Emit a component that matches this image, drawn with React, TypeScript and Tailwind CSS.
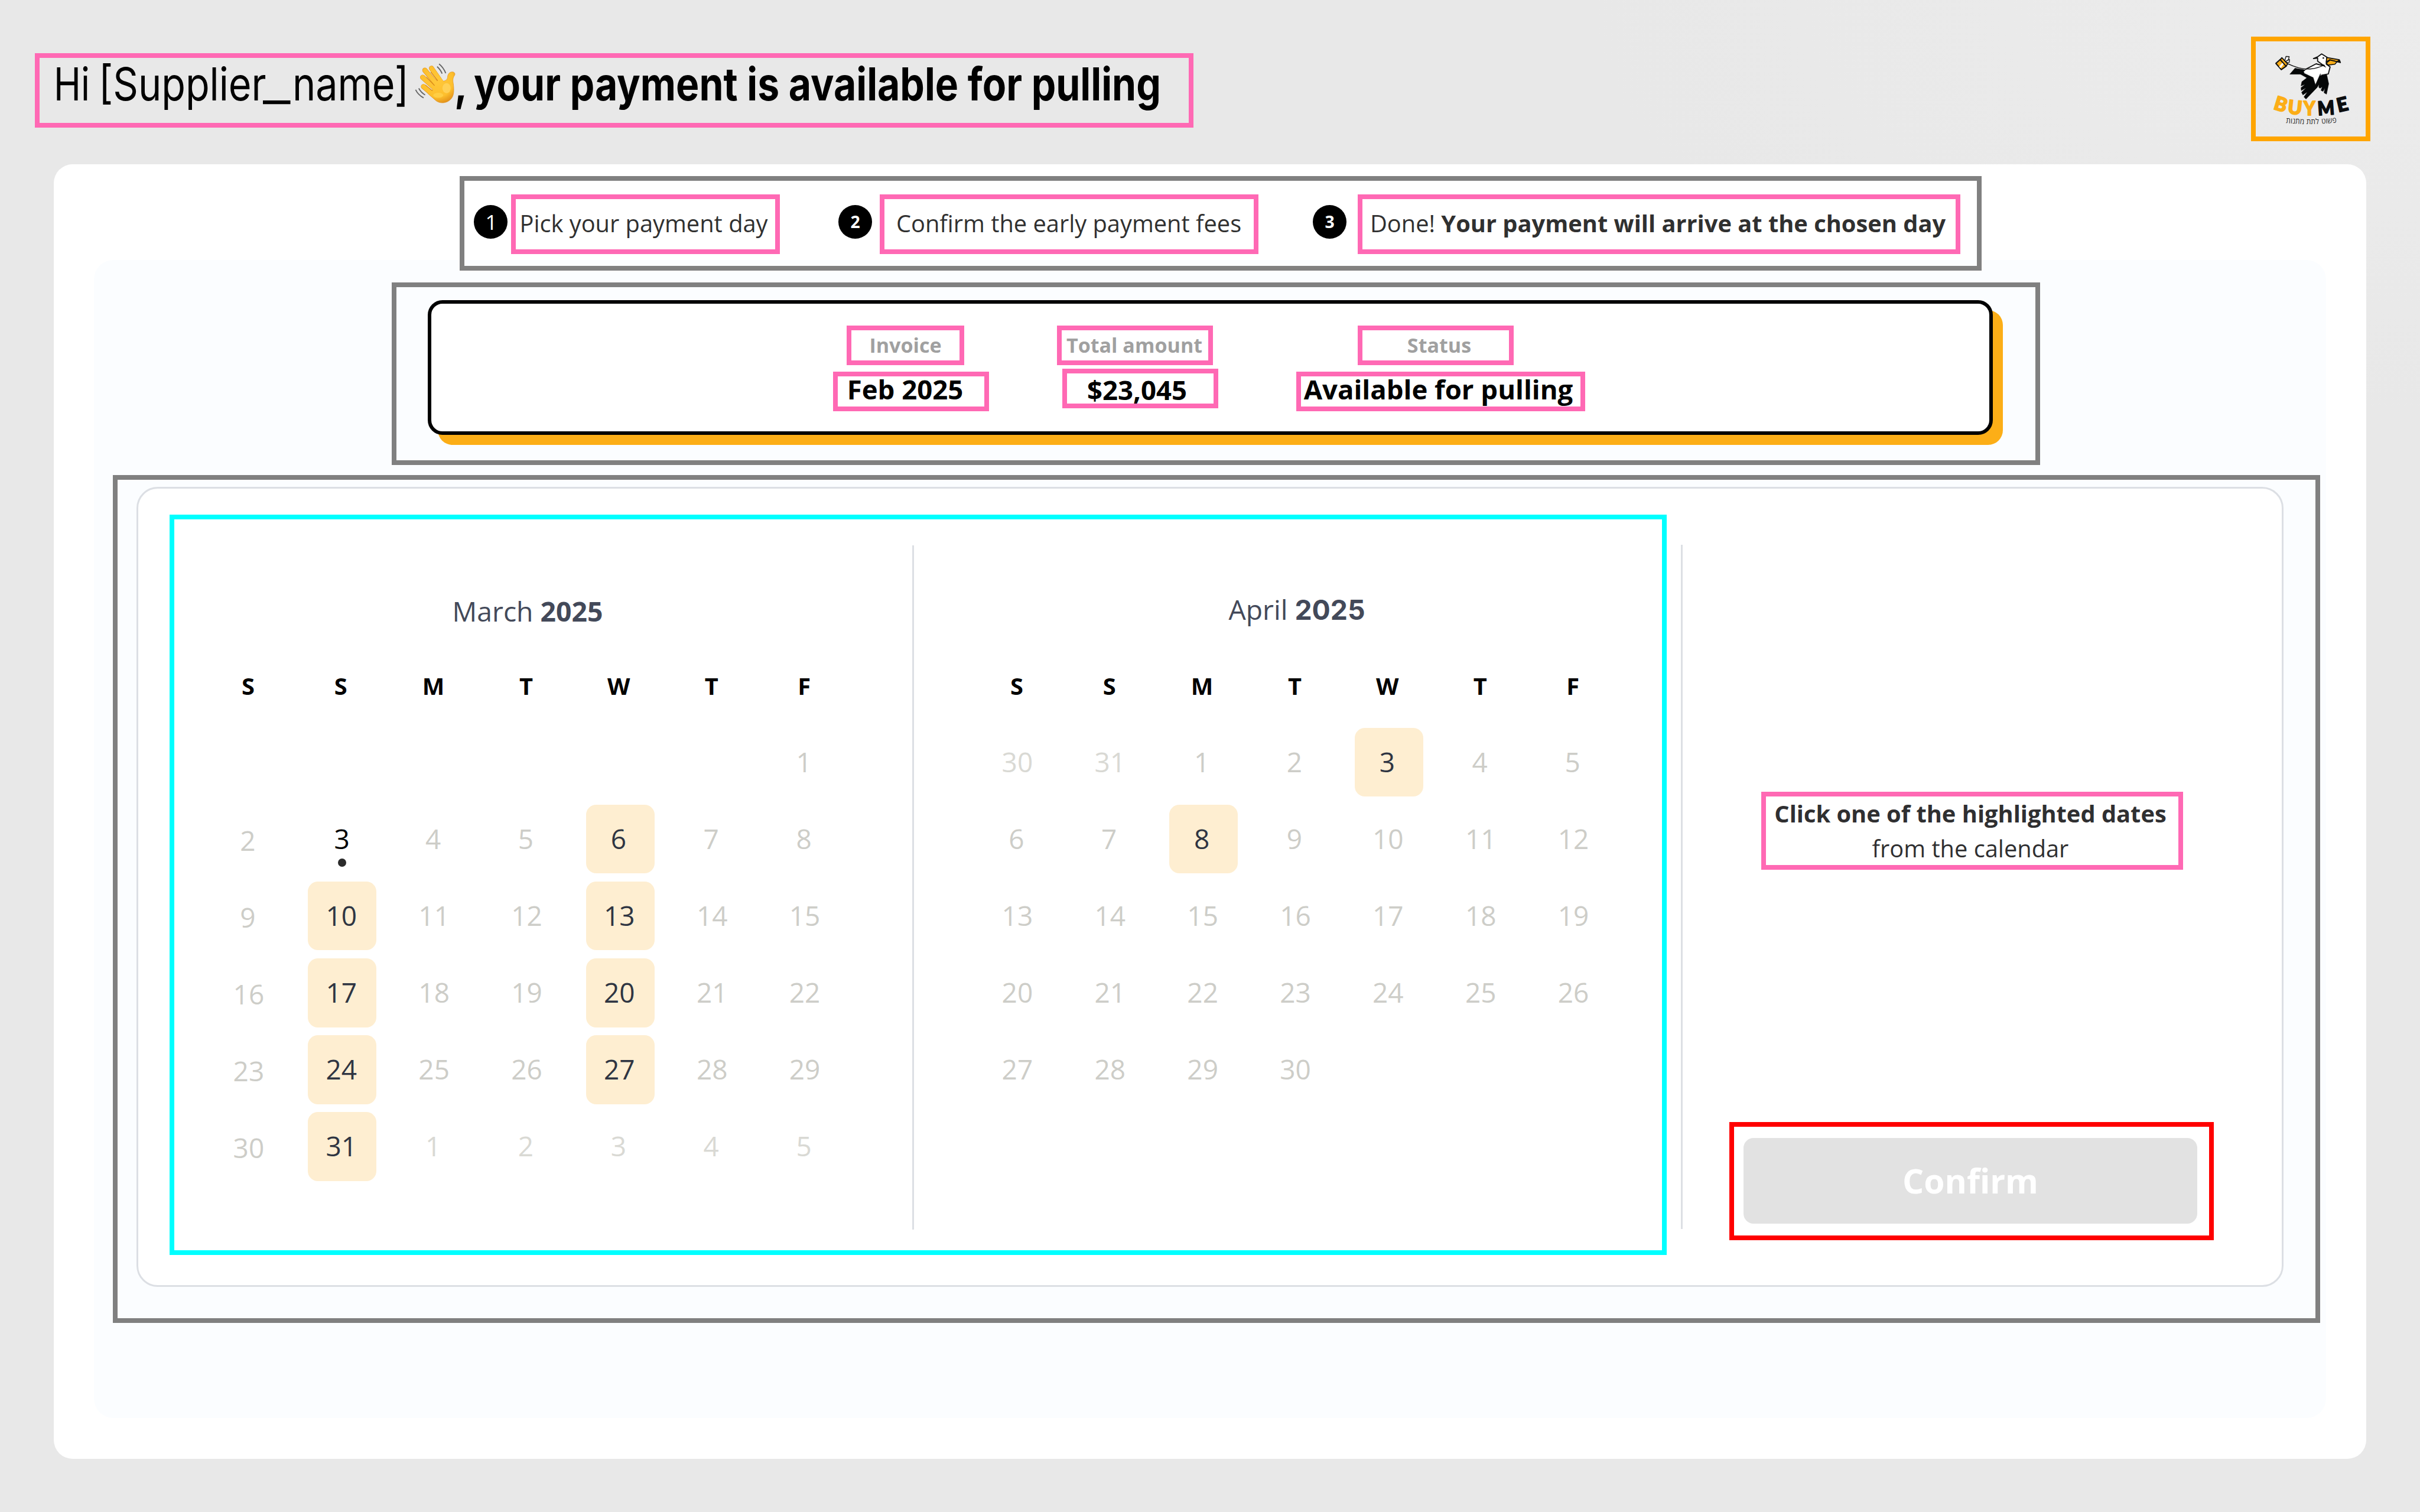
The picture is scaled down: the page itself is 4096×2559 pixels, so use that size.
import type { ReactNode } from "react";

type Day = { n: string; kind?: "off" | "dim" | "pick" | "today" };

const off = (...ns: number[]): Day[] => ns.map((n) => ({ n: String(n), kind: "off" }));
const dim = (...ns: number[]): Day[] => ns.map((n) => ({ n: String(n), kind: "dim" }));
const pick = (n: number): Day => ({ n: String(n), kind: "pick" });
const blank = (count: number): Day[] => Array.from({ length: count }, () => ({ n: "" }));

const MARCH: Day[] = [
  ...blank(6), ...off(1),
  ...off(2), { n: "3", kind: "today" }, ...off(4, 5), pick(6), ...off(7, 8),
  ...off(9), pick(10), ...off(11, 12), pick(13), ...off(14, 15),
  ...off(16), pick(17), ...off(18, 19), pick(20), ...off(21, 22),
  ...off(23), pick(24), ...off(25, 26), pick(27), ...off(28, 29),
  ...off(30), pick(31), ...dim(1, 2, 3, 4, 5),
];

const APRIL: Day[] = [
  ...dim(30, 31), ...off(1, 2), pick(3), ...off(4, 5),
  ...off(6, 7), pick(8), ...off(9, 10, 11, 12),
  ...off(13, 14, 15, 16, 17, 18, 19),
  ...off(20, 21, 22, 23, 24, 25, 26),
  ...off(27, 28, 29, 30),
];

const WEEKDAYS = ["S", "S", "M", "T", "W", "T", "F"];

const DAY_COLOR = {
  off: "text-[#cdcdc8]",
  dim: "text-[#d9d9d4]",
  pick: "text-[#2f3542] bg-[#feeed1]",
  today: "text-black",
};

function DayCell({ day, lowered }: { day: Day; lowered: boolean }) {
  const nudge = day.kind === "today" ? "pr-[1px]" : day.n.length === 1 ? "pr-[6px]" : "pr-[3px]";
  return (
    <div className="flex h-[130.1px] items-center justify-center">
      <div
        className={`relative flex h-[116.4px] w-[116.4px] items-center justify-center rounded-[17px] text-[46px] leading-none ${
          day.kind ? DAY_COLOR[day.kind] : ""
        } ${nudge} ${lowered ? "pt-[3px]" : "pb-[3px]"}`}
      >
        {day.n}
        {day.kind === "today" && (
          <span className="absolute bottom-[11px] left-[51px] size-[14px] rounded-full bg-[#2b2b2b]" />
        )}
      </div>
    </div>
  );
}

function Month({ title, days, lowerFirst, className }: { title: ReactNode; days: Day[]; lowerFirst?: boolean; className: string }) {
  return (
    <div className={`flex w-[1098px] flex-col ${className}`}>
      <div className="flex h-[64px] items-center justify-center whitespace-pre text-[46.300px] leading-none text-[#434959]">{title}</div>
      <div className="mt-auto grid h-[56px] grid-cols-7 items-center text-center text-[39.8px] leading-none font-bold text-black">
        {WEEKDAYS.map((d, i) => (
          <span key={i} className="pr-[5px]">{d}</span>
        ))}
      </div>
      <div className="mt-[36px] grid h-[782px] grid-cols-7 content-start">
        {days.map((d, i) => (
          <DayCell key={i} day={d} lowered={!!lowerFirst && i % 7 === 0} />
        ))}
      </div>
    </div>
  );
}

function Pink({ className, children }: { className: string; children: ReactNode }) {
  return (
    <div className={`flex shrink-0 items-center justify-center border-8 border-[#ff69b4] leading-none whitespace-nowrap ${className}`}>
      {children}
    </div>
  );
}

function Bullet({ className, children }: { className: string; children: ReactNode }) {
  return (
    <div className={`mt-[41px] flex size-[57px] shrink-0 items-center justify-center rounded-full bg-black leading-none text-white ${className}`}>
      {children}
    </div>
  );
}

function Squeezed({ className, children }: { className: string; children: ReactNode }) {
  return <span className={`inline-block origin-left ${className}`}>{children}</span>;
}

function WavingHand() {
  return (
    <svg viewBox="55 60 300 300" className="h-[70.2px] w-[70.2px]" fill="none" strokeLinecap="round">
      <defs>
        <radialGradient id="skin" gradientUnits="userSpaceOnUse" cx="215" cy="190" r="170">
          <stop offset="0" stopColor="#ffc83a" />
          <stop offset="0.7" stopColor="#fdbf2d" />
          <stop offset="1" stopColor="#e2901a" />
        </radialGradient>
      </defs>
      <g stroke="#e0921c" strokeWidth="37">
        <path d="M176 101 L248 205" />
        <path d="M128 115 L220 225" />
        <path d="M112 166 L210 255" />
        <path d="M118 233 L220 320" />
      </g>
      <path
        d="M222 186 C245 198 285 200 292 170 C292 145 305 128 325 127 C342 126 350 140 343 152 C330 170 329 188 334 212 C340 260 340 300 315 325 C290 352 245 360 212 338 L150 284 L190 250 L200 215 Z"
        fill="url(#skin)"
        stroke="#e0921c"
        strokeWidth="3"
      />
      <g stroke="url(#skin)" strokeWidth="32">
        <path d="M176 101 L250 205" />
        <path d="M128 115 L222 225" />
        <path d="M112 166 L210 255" />
        <path d="M118 233 L220 318" />
      </g>
      <g stroke="#d98a18" strokeWidth="5">
        <path d="M172 130 L220 189" />
        <path d="M140 166 L197 225" />
        <path d="M134 223 L182 263" />
      </g>
      <ellipse cx="285" cy="245" rx="30" ry="36" fill="#ffd766" opacity="0.7" />
      <ellipse cx="225" cy="296" rx="36" ry="18" fill="#ffd34f" opacity="0.7" />
      <g stroke="#666" strokeWidth="8" strokeLinecap="butt">
        <path d="M231 70 Q262 95 279 136" />
        <path d="M217 89 Q242 112 253 140" />
        <path d="M84 246 Q100 276 130 294" />
        <path d="M61 256 Q80 294 119 315" />
      </g>
    </svg>
  );
}

function BuyMeLogo() {
  return (
    <svg viewBox="168 120 792 684" className="h-full w-full" strokeLinejoin="round">
      <path d="M414 356 L451 313 L525 326 L512 356 Z" fill="#050708" stroke="#050708" strokeWidth="3" />
      <path d="M512 340 L540 315 L603 281 L655 296 L680 280 L704 303 L691 354 L636 366 L598 432 L582 380 Z" fill="#fff" />
      <path d="M525 322 L603 281 L648 293" fill="none" stroke="#111" strokeWidth="8" />
      <path
        d="M505 344 L582 380 L598 432 L634 352 L634 366 L680 360 L694 425 L678 500 L660 490 L666 456 L653 480 L638 473 L647 446 L632 458 L622 450 L624 430 L610 452 L530 535 L515 520 L540 484 L508 506 L498 486 L530 455 L496 474 L494 453 L524 429 L494 441 L500 410 L536 382 L490 356 Z"
        fill="#050708"
        stroke="#050708"
        strokeWidth="2"
      />
      <path d="M395 278 C450 305 510 322 560 318 C610 315 645 300 680 280" fill="none" stroke="#111" strokeWidth="6" />
      <path d="M676 283 L704 303 L691 354 L640 364" fill="none" stroke="#111" strokeWidth="8" />
      <path d="M584 243 L612 232 L643 210 L682 234 L672 290 L652 290 L614 262 L614 240 Z" fill="#fff" />
      <path d="M652 290 L614 262 L614 240 L584 243 L612 232 L643 210 L682 234 L676 280" fill="none" stroke="#111" strokeWidth="8" />
      <path d="M584 244 L612 230 L616 242 Z" fill="#111" />
      <path d="M632 286 L660 286 L676 309 Z" fill="#050708" />
      <circle cx="655" cy="239" r="5.500" fill="#111" />
      <path d="M680 236 L770 252 L778 272 L700 252 L676 268 Z" fill="#fcae17" stroke="#111" strokeWidth="8" />
      <path d="M704 254 L754 266 L738 284 L690 290 L676 276 Z" fill="#fcae17" stroke="#111" strokeWidth="7" />
      <path d="M752 264 L779 273 L768 250 Z" fill="#111" />
      <path d="M376 262 L386 228 L409 229 L404 250 L386 262 L411 250 L410 270 L392 272 Z" fill="#f4f4f4" stroke="#222" strokeWidth="6" />
      <path d="M344 250 L388 298 L352 323 L313 278 Z" fill="#fcae17" stroke="#111" strokeWidth="9" />
      <path d="M336 302 L362 270 L372 280 L348 312 Z" fill="#fff" />
      <path d="M356 237 L398 282 L386 298 L345 251 Z" fill="#fcae17" stroke="#111" strokeWidth="8" />
      <g fontFamily="Lato, sans-serif" fontWeight="900" fontSize="138" textAnchor="middle" strokeWidth="8">
        <g fill="#fcae17" stroke="#fcae17">
          <text transform="translate(334 619) rotate(17)">B</text>
          <text transform="translate(446 644) rotate(6)">U</text>
          <text transform="translate(555 653) scale(0.92 1)">Y</text>
        </g>
        <g fill="#0b0d0f" stroke="#0b0d0f">
          <text transform="translate(678 648) rotate(-4) scale(0.92 1)">M</text>
          <text transform="translate(803 621) rotate(-13)">E</text>
        </g>
      </g>
      <g fontFamily="'Open Sans', sans-serif" fontSize="56" textAnchor="middle" fill="#2a2a2a">
        <text textLength="108" lengthAdjust="spacingAndGlyphs" transform="translate(697 709) rotate(-4)">פשוט</text>
        <text textLength="90" lengthAdjust="spacingAndGlyphs" transform="translate(578 717)">לתת</text>
        <text textLength="132" lengthAdjust="spacingAndGlyphs" transform="translate(451 712) rotate(4)">מתנות</text>
      </g>
    </svg>
  );
}

export default function App() {
  return (
    <div className="h-[2559px] w-[4096px] overflow-hidden bg-[#e8e8e8] bg-[radial-gradient(ellipse_1400px_700px_at_100%_0%,#ececec,#e8e8e8)] font-['Open_Sans',sans-serif]">
      <header className="flex h-[278px] items-start justify-between pr-[84px] pl-[59px]">
        <h1 className="mt-[90px] flex h-[126px] w-[1961px] items-start border-8 border-[#ff69b4] font-['Inter',sans-serif] text-[77.300px] leading-[89px] whitespace-pre text-black">
          <span className="flex w-[635px] shrink-0 pl-[24px]">
            <span className="w-[76px] shrink-0"><Squeezed className="scale-x-[0.8]">Hi</Squeezed></span>
            <span className="w-[278px] shrink-0"><Squeezed className="scale-x-[0.86]">[Supplier</Squeezed></span>
            <span className="w-[50px] shrink-0"><Squeezed className="scale-x-[1.32]">_</Squeezed></span>
            <span className="w-[190px] shrink-0"><Squeezed className="scale-x-[0.86]">name]</Squeezed></span>
          </span>
          <span className="mt-[8px] block w-[67px] shrink-0">
            <WavingHand />
          </span>
          <span className="w-[33px] shrink-0 font-bold"><Squeezed className="scale-x-[0.86]">,</Squeezed></span>
          <span className="w-[1160px] shrink-0 font-bold">
            <Squeezed className="scale-x-[0.854]">your payment is available for pulling</Squeezed>
          </span>
        </h1>
        <div className="mt-[62px] h-[177px] w-[202px] border-8 border-[#ffa500]">
          <BuyMeLogo />
        </div>
      </header>

      <main className="ml-[91px] flex h-[2191px] w-[3914px] flex-col items-start rounded-[32px] bg-white">
        <section className="z-10 mt-[20px] -mb-[18px] ml-[687px] flex h-[160px] w-[2576px] shrink-0 items-start border-8 border-[#808080] text-[39.8px] text-[#303030]">
          <Bullet className="ml-[16px] pl-[2px] text-[35px] font-medium">1</Bullet>
          <Pink className="mt-[23px] ml-[6px] h-[101px] w-[455px] pr-[6px] pb-[4px]">Pick your payment day</Pink>
          <Bullet className="ml-[99px] text-[28.400px] font-bold">2</Bullet>
          <Pink className="mt-[23px] ml-[13px] h-[101px] w-[641px] pr-[1px] pb-[4px]">Confirm the early payment fees</Pink>
          <Bullet className="ml-[92px] text-[28.400px] font-bold">3</Bullet>
          <Pink className="mt-[23px] ml-[19px] h-[101px] w-[1020px] pr-[4px] pb-[4px]">
            <span className="whitespace-pre">Done! <b className="font-bold">Your payment will arrive at the chosen day</b></span>
          </Pink>
        </section>

        <div className="ml-[68px] flex h-[1960px] w-[3778px] flex-col items-start rounded-[33px] bg-[#fbfdff]">
          <section className="mt-[38px] ml-[504px] h-[309px] w-[2790px] border-8 border-[#808080]">
            <div className="mt-[22px] ml-[53px] flex h-[228px] w-[2649px] items-start rounded-[25px] border-6 border-black bg-white pt-[37px] pl-[680px] font-bold shadow-[17px_17px_0_#fcae17]">
              <div className="w-[264px]">
                <Pink className="ml-[23px] h-[67px] w-[199px] text-[34.100px] text-[#a0a0a0]">Invoice</Pink>
                <Pink className="mt-[11px] h-[67px] w-[264px] pr-[20px] pb-[7px] text-[45.5px]">Feb 2025</Pink>
              </div>
              <div className="ml-[115px] w-[273px]">
                <Pink className="h-[67px] w-[264px] pr-[2px] text-[34.100px] text-[#a0a0a0]">Total amount</Pink>
                <Pink className="mt-[6px] ml-[9px] h-[67px] w-[264px] pt-[4px] pr-[11px] text-[45.5px]">$23,045</Pink>
              </div>
              <div className="ml-[132px] w-[489px]">
                <Pink className="ml-[104px] h-[67px] w-[264px] pl-[12px] text-[34.100px] text-[#a0a0a0]">Status</Pink>
                <Pink className="mt-[11px] h-[67px] w-[489px] pr-[8px] pb-[7px] text-[45.5px]">Available for pulling</Pink>
              </div>
            </div>
          </section>

          <section className="mt-[17px] ml-[32px] h-[1435px] w-[3736px] border-8 border-[#808080]">
            <div className="mt-[12px] ml-[32px] flex h-[1354px] w-[3634px] items-start rounded-[36px] border-3 border-[#dcdfe4] bg-white">
              <div className="mt-[44px] ml-[53px] flex h-[1253px] w-[2534px] shrink-0 items-start border-8 border-[#00ffff]">
                <Month
                  className="mt-[124px] ml-[49px] h-[1004px]"
                  lowerFirst
                  days={MARCH}
                  title={<span>March <b className="font-bold">2025</b></span>}
                />
                <div className="mt-[44px] ml-[102px] h-[1158px] w-[3px] bg-[#dcdfe4]" />
                <Month
                  className="mt-[121px] ml-[98px] h-[1007px]"
                  days={APRIL}
                  title={<span className="pl-[2px]">April <b className="font-['Inter',sans-serif] font-bold">2025</b></span>}
                />
              </div>
              <div className="mt-[95px] ml-[24px] h-[1158px] w-[3px] shrink-0 bg-[#dcdfe4]" />
              <div className="flex flex-col">
                <Pink className="mt-[513px] ml-[133px] h-[132px] w-[714px] pr-[6px]">
                  <p className="text-center text-[39.8px] leading-[59.300px] text-[#2f2f31]">
                    <b className="font-bold">Click one of the highlighted dates</b>
                    <br />
                    from the calendar
                  </p>
                </Pink>
                <div className="mt-[427px] ml-[79px] h-[200px] w-[820px] border-8 border-[#ff0000]">
                  <button className="mt-[19px] ml-[16px] flex h-[145px] w-[768px] items-center justify-center rounded-[17px] bg-[#e2e2e2] text-[56.900px] leading-none font-bold text-white">
                    Confirm
                  </button>
                </div>
              </div>
            </div>
          </section>
        </div>
      </main>
    </div>
  );
}
